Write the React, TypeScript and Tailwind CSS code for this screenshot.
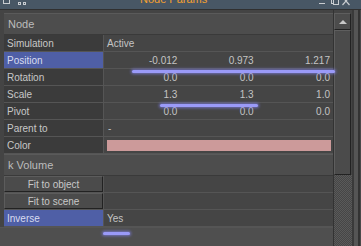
import type { ReactNode } from 'react'

const font = { fontFamily: '"Liberation Sans", Arial, sans-serif' }

function Row({
  label,
  active = false,
  children,
}: {
  label: string
  active?: boolean
  children?: ReactNode
}) {
  return (
    <div className="flex h-[17px] border-b border-[#555]">
      <div
        className={`flex w-[100px] shrink-0 items-center border-r border-[#555] pl-[3px] ${
          active ? 'bg-[#4f5fa6] text-[#d8dcf0]' : 'bg-[#3b3b3b] text-[#c8c8c8]'
        }`}
      >
        {label}
      </div>
      <div className="flex min-w-0 flex-1 items-center bg-[#454545] text-[#c4c4c4]">{children}</div>
    </div>
  )
}

function Triple({ values }: { values: string[] }) {
  return (
    <div className="grid w-full grid-cols-3">
      {values.map((v, i) => (
        <span key={i} className="pr-[3px] text-right">
          {v}
        </span>
      ))}
    </div>
  )
}

function Header({ title }: { title: string }) {
  return (
    <div className="flex h-[22px] items-center border-t border-[#5a5a5a] border-b border-b-[#3a3a3a] bg-[#4d4d4d] pl-[4px] text-[11px] text-[#bcbcbc]">
      {title}
    </div>
  )
}

function ButtonRow({ label }: { label: string }) {
  return (
    <div className="flex h-[17px] border-b border-[#555]">
      <div className="flex w-[99px] shrink-0 items-center justify-center border-t border-l border-[#5c5c5c] border-r border-b border-r-[#222] border-b-[#222] bg-[#4b4b4b] text-[#c8c8c8]">
        {label}
      </div>
      <div className="flex-1 border-l border-[#555] bg-[#454545]" />
    </div>
  )
}

function Glow({ className }: { className: string }) {
  return (
    <div
      className={`absolute h-[3px] rounded-full bg-[#9a9af8] shadow-[0_0_3px_1px_rgba(130,130,240,0.7)] ${className}`}
    />
  )
}

export default function App() {
  return (
    <div className="relative flex h-[246px] w-[361px] flex-col overflow-hidden bg-[#444] text-[10px]" style={font}>
      {/* title bar */}
      <div className="relative h-[10px] shrink-0 border-b border-[#303030] bg-[#485765]">
        <div className="absolute left-[3px] top-[-3px] h-[7px] w-[7px] border border-[#c8ccd0]" />
        <div className="absolute left-[18px] top-[2px] flex gap-[2px]">
          <div className="h-[3px] w-[3px] border border-[#c8ccd0]" />
          <div className="h-[3px] w-[3px] border border-[#c8ccd0]" />
        </div>
        <div className="absolute left-[140px] top-[-6px] text-[11px] leading-none text-[#f5a030]">Node Params</div>
        <div className="absolute left-[319px] top-[3px] h-px w-[6px] bg-[#c8ccd0]" />
        <div className="absolute left-[331px] top-[-3px] h-[7px] w-[6px] border border-[#c8ccd0]" />
        <div className="absolute left-[333px] top-[-1px] h-[6px] w-[6px] border border-[#c8ccd0] bg-[#485765]" />
        <svg className="absolute left-[342px] top-[-3px]" width="8" height="9" viewBox="0 0 8 9">
          <path d="M0.5 0 L7.5 8 M7.5 0 L0.5 8" stroke="#c8ccd0" strokeWidth="1.2" />
        </svg>
      </div>

      <div className="flex min-h-0 flex-1">
        {/* main column */}
        <div className="flex min-w-0 flex-1 flex-col">
          <div className="pl-[4px] pt-[3px]">
            <Header title="Node" />
            <Row label="Simulation">
              <span className="pl-[3px]">Active</span>
            </Row>
            <Row label="Position" active>
              <Triple values={['-0.012', '0.973', '1.217']} />
            </Row>
            <Row label="Rotation">
              <Triple values={['0.0', '0.0', '0.0']} />
            </Row>
            <Row label="Scale">
              <Triple values={['1.3', '1.3', '1.0']} />
            </Row>
            <Row label="Pivot">
              <Triple values={['0.0', '0.0', '0.0']} />
            </Row>
            <Row label="Parent to">
              <span className="pl-[4px]">-</span>
            </Row>
            <Row label="Color">
              <div className="ml-[3px] mr-[2px] h-[11px] flex-1 bg-[#cc9a9a]" />
            </Row>
            <Header title="k Volume" />
            <ButtonRow label="Fit to object" />
            <ButtonRow label="Fit to scene" />
            <Row label="Inverse" active>
              <span className="pl-[3px]">Yes</span>
            </Row>
          </div>
          <div className="flex-1 border-t border-[#555] bg-[#4f4f4f]" />
        </div>

        {/* scrollbar */}
        <div className="flex w-[19px] shrink-0 flex-col border-l border-[#333] pt-[3px]">
          <div className="flex h-[17px] w-[17px] items-center justify-center border border-[#5e5e5e] border-b-[#222] border-r-[#222] bg-[#4c4c4c]">
            <div className="h-0 w-0 border-x-[4px] border-b-[4px] border-x-transparent border-b-[#c8c8c8]" />
          </div>
          <div className="h-[145px] w-[17px] border border-[#5e5e5e] border-b-[#222] border-r-[#222] bg-[#4b4b4b]" />
          <div className="w-[18px] flex-1 bg-[repeating-conic-gradient(#5a5a5a_0_25%,#464646_0_50%)] bg-[length:2px_2px]" />
        </div>

        {/* window frame */}
        <div className="flex w-[9px] shrink-0">
          <div className="w-[2px] bg-[#3a3a3a]" />
          <div className="w-[4px] bg-[#555]" />
          <div className="w-[2px] bg-[#333]" />
          <div className="w-[1px] bg-[#4a4a4a]" />
        </div>
      </div>

      <Glow className="left-[132px] top-[70px] w-[203px]" />
      <Glow className="left-[160px] top-[104px] w-[98px]" />
      <Glow className="left-[103px] top-[232px] w-[27px]" />
    </div>
  )
}
